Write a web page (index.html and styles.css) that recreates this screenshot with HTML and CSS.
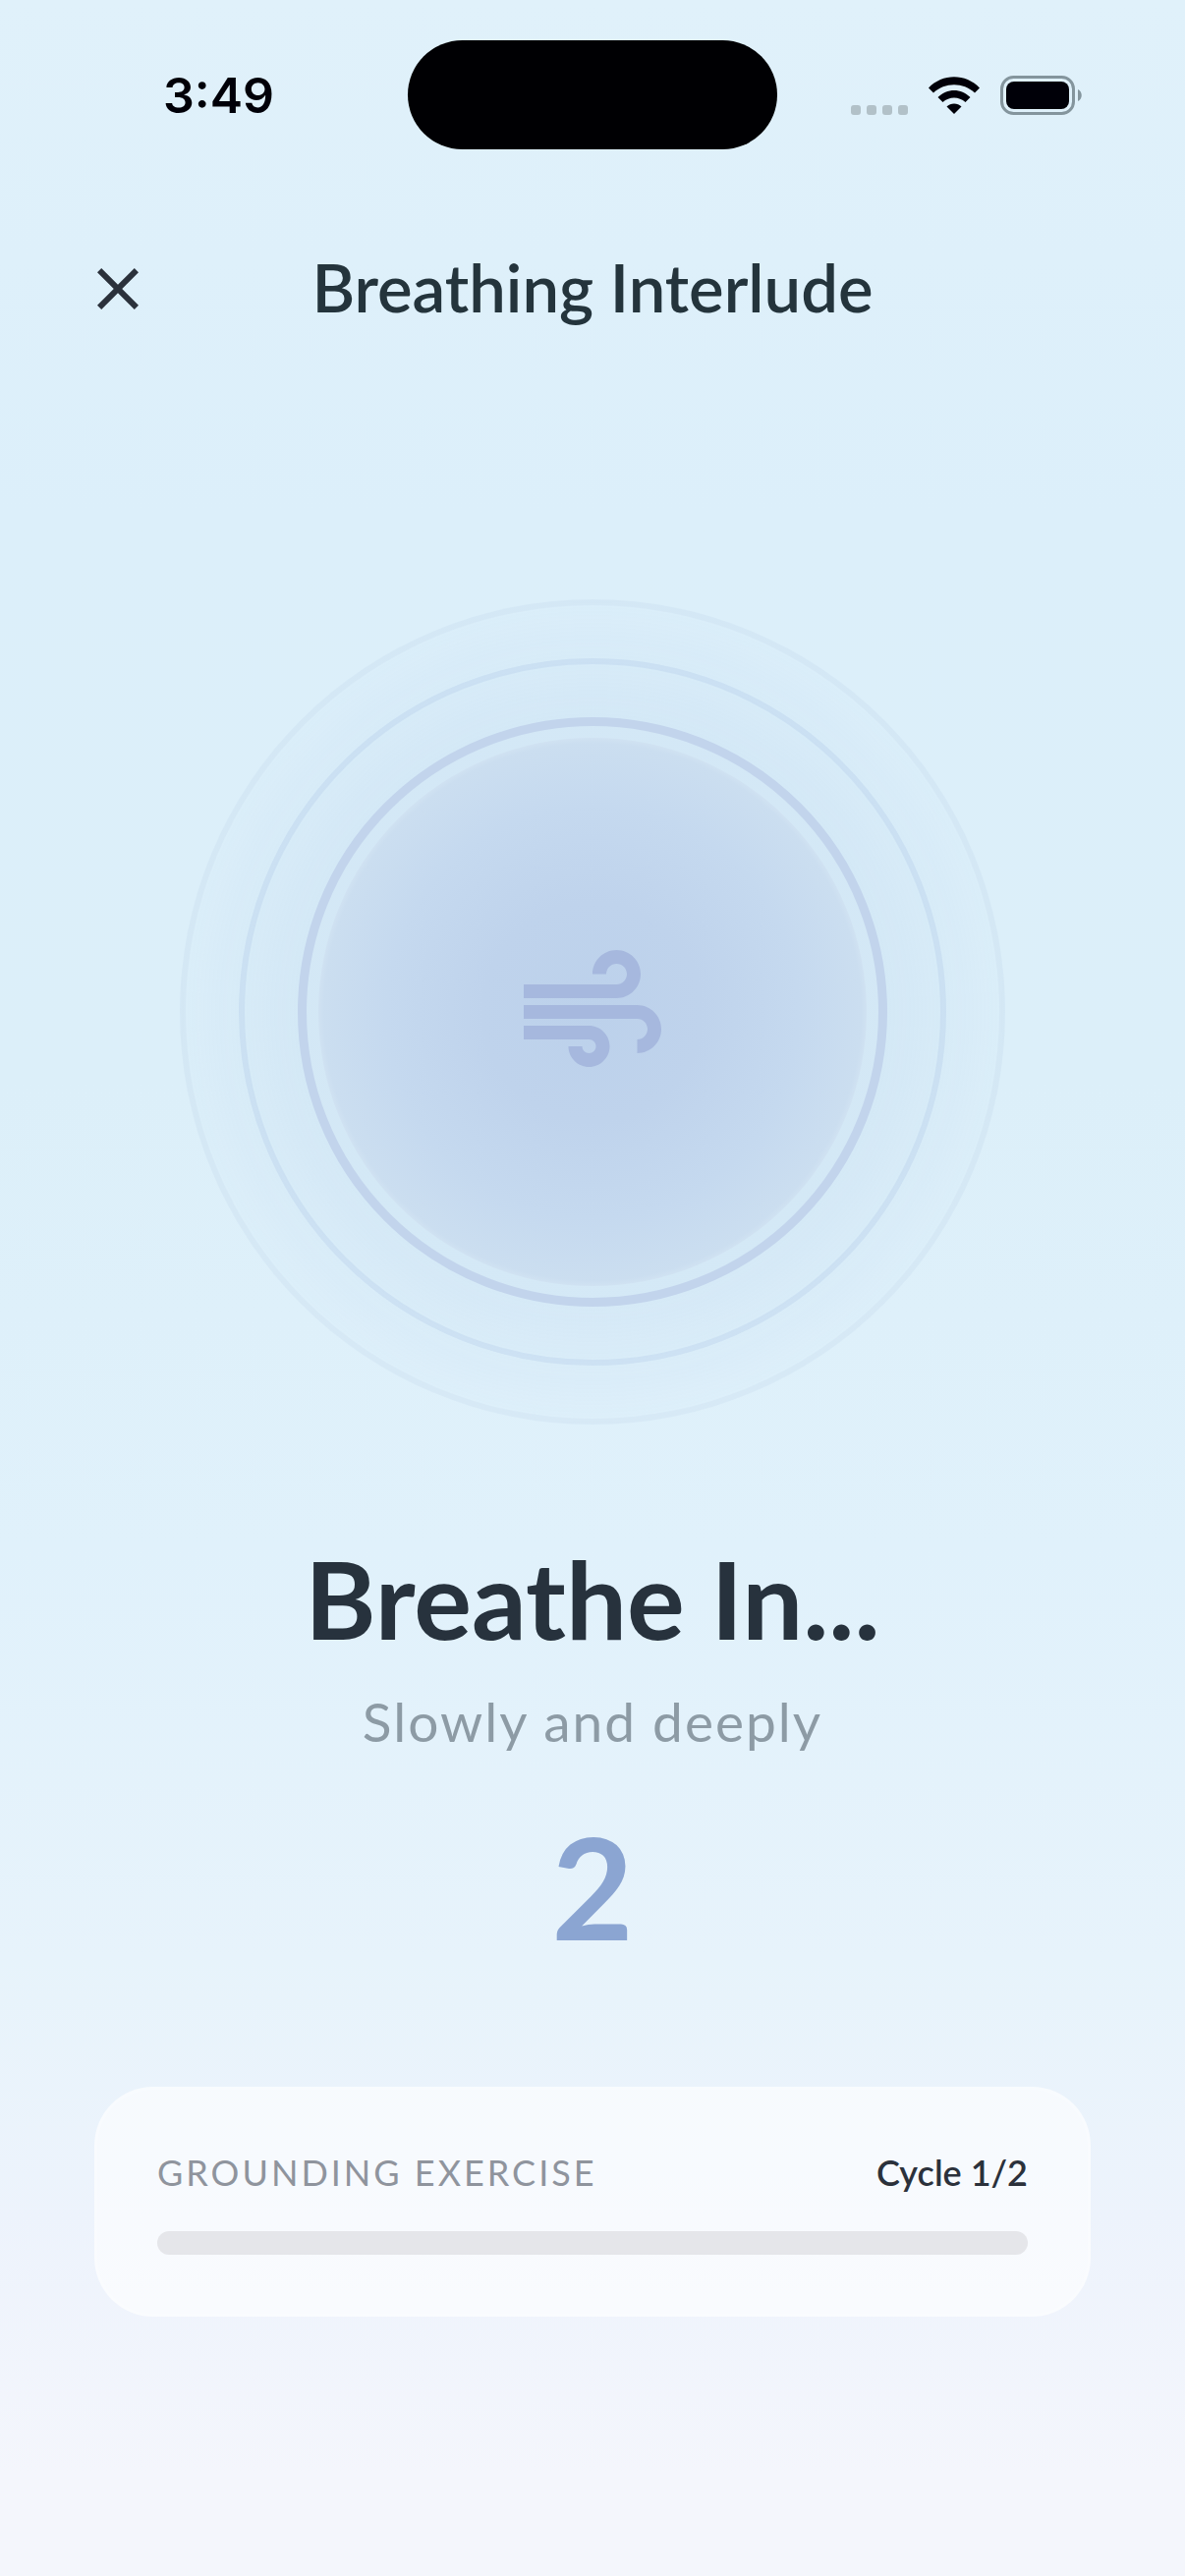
FILE: index.html
```html
<!DOCTYPE html>
<html lang="en">
<head>
    <meta charset="UTF-8">
    <meta name="viewport" content="width=device-width, initial-scale=1.0">
    <title>Breathing Interlude</title>
    <link rel="stylesheet" href="styles.css">
</head>
<body>
    <div class="screen">

        <!-- Status bar -->
        <div class="status-bar">
            <span class="time">3:49</span>
            <div class="island"></div>
            <div class="status-icons">
                <div class="signal"><i></i><i></i><i></i><i></i></div>
                <svg class="wifi" viewBox="0 0 52 38" aria-hidden="true">
                    <path d="M0 11.500C14-3.500 38-3.500 52 11.500L47 16.500C35.500 5.500 16.500 5.500 5 16.500Z"/>
                    <path d="M9.500 21C19 11.500 33 11.500 42.500 21L37.500 26C31 20 21 20 14.500 26Z"/>
                    <path d="M18.500 30.500C22.500 26.500 29.500 26.500 33.500 30.500L26 38Z"/>
                </svg>
                <svg class="battery" viewBox="0 0 84 40" aria-hidden="true">
                    <rect class="battery-shell" x="1.500" y="1.500" width="73" height="37" rx="12"/>
                    <rect x="6" y="6" width="64" height="28" rx="8"/>
                    <path class="battery-tip" d="M79 14C84 16 84 24 79 26Z"/>
                </svg>
            </div>
        </div>

        <!-- Header -->
        <header class="header">
            <button class="close-btn" type="button" aria-label="Close">
                <svg viewBox="0 0 24 24" aria-hidden="true">
                    <path d="M19 6.410 17.590 5 12 10.590 6.410 5 5 6.410 10.590 12 5 17.590 6.410 19 12 13.410 17.590 19 19 17.590 13.410 12z"/>
                </svg>
            </button>
            <h1>Breathing Interlude</h1>
        </header>

        <main class="content">
            <!-- Breathing circle -->
            <div class="breath">
                <div class="ring ring-outer">
                    <div class="ring ring-middle">
                        <div class="ring ring-inner">
                            <div class="disc">
                                <svg class="air" viewBox="0 0 24 24" aria-hidden="true">
                                    <path d="M14.500 17c0 1.650-1.350 3-3 3s-3-1.350-3-3h2c0 .55.45 1 1 1s1-.45 1-1-.45-1-1-1H2v-2h9.500c1.650 0 3 1.350 3 3zM19 6.500C19 4.570 17.430 3 15.500 3S12 4.570 12 6.500h2c0-.83.67-1.500 1.500-1.500s1.500.67 1.500 1.500S16.330 8 15.500 8H2v2h13.500c1.930 0 3.500-1.570 3.500-3.500zm-.5 4.500H2v2h16.500c.83 0 1.500.67 1.500 1.500s-.67 1.500-1.500 1.500v2c1.930 0 3.500-1.570 3.500-3.500S20.430 11 18.500 11z"/>
                                </svg>
                            </div>
                        </div>
                    </div>
                </div>
            </div>

            <h2 class="phase">Breathe In...</h2>
            <p class="hint">Slowly and deeply</p>
            <p class="count">2</p>

            <!-- Progress card -->
            <section class="card">
                <div class="card-row">
                    <label class="card-label" for="progress">GROUNDING EXERCISE</label>
                    <span class="cycle">Cycle 1/2</span>
                </div>
                <progress id="progress" class="progress" value="0" max="100"></progress>
            </section>
        </main>
    </div>
</body>
</html>
```

FILE: styles.css
```css
/* Basic styles */
* {
    box-sizing: border-box;
}

body {
    margin: 0;
    font-family: Lato, "Open Sans", sans-serif;
    color: #263238;
}

h1, h2, p {
    margin: 0;
}

.screen {
    min-height: 100vh;
    background: linear-gradient(180deg, #e0f1fa 0%, #dceffa 20%, #dceff9 42%, #e0f1fb 60%, #e7f3fb 76%, #edf3fc 86%, #f4f6fc 96%, #f4f6fc 100%);
}

/* Status bar */
.status-bar {
    display: grid;
    grid-template-columns: 1fr auto 1fr;
    align-items: center;
    padding: 41px 104px 0;
}

.time {
    font-family: Inter, sans-serif;
    font-size: 50px;
    font-weight: 600;
    line-height: 60px;
    padding-left: 62px;
    color: #000008;
}

.island {
    width: 376px;
    height: 111px;
    border-radius: 56px;
    background-color: #000003;
}

.status-icons {
    display: flex;
    align-items: center;
    justify-content: flex-end;
    gap: 21px;
    fill: #000008;
}

.signal {
    display: flex;
    align-self: flex-end;
    gap: 6px;
}

.signal i {
    width: 10px;
    height: 10px;
    border-radius: 3px;
    background-color: #b2c1c8;
}

.wifi {
    width: 52px;
    height: 38px;
}

.battery {
    width: 84px;
    height: 40px;
}

.battery-shell {
    fill: none;
    stroke: #84959d;
    stroke-width: 3;
}

.battery-tip {
    fill: #84959d;
}

/* Header */
.header {
    display: grid;
    grid-template-columns: 72px 1fr 72px;
    align-items: start;
    padding: 94px 84px 0;
}

.close-btn {
    width: 72px;
    height: 96px;
    padding: 0;
    border: none;
    background: none;
    cursor: pointer;
}

.close-btn svg {
    display: block;
    width: 72px;
    height: 72px;
    fill: #2b313b;
}

.header h1 {
    font-size: 67px;
    font-weight: 600;
    line-height: 92px;
    text-align: center;
    color: #24343c;
}

/* Breathing circle */
.content {
    display: flex;
    flex-direction: column;
    align-items: center;
    padding: 268px 96px 0;
}

.ring {
    display: flex;
    align-items: center;
    justify-content: center;
    border-radius: 50%;
    border-style: solid;
}

.ring-outer {
    width: 840px;
    height: 840px;
    border: 6px solid rgba(159, 178, 210, 0.09);
    background: radial-gradient(closest-side, rgba(160, 190, 230, 0.14) 70%, rgba(160, 190, 230, 0.02) 100%);
}

.ring-middle {
    width: 720px;
    height: 720px;
    border: 6px solid rgba(150, 175, 220, 0.18);
}

.ring-inner {
    width: 600px;
    height: 600px;
    border: 9px solid #c2d4ec;
}

.disc {
    display: flex;
    align-items: center;
    justify-content: center;
    width: 558px;
    height: 558px;
    border-radius: 50%;
    background: radial-gradient(closest-side, #bcd1eb 0%, #bfd3ec 40%, #c5d9ef 75%, #cbdef0 98%, #d0e2f2 100%);
}

.air {
    width: 168px;
    height: 168px;
    fill: #a6b8de;
}

/* Texts */
.phase {
    margin-top: 104px;
    font-size: 110px;
    font-weight: 700;
    line-height: 144px;
    color: #27323d;
}

.hint {
    margin-top: 18px;
    font-size: 55px;
    line-height: 72px;
    letter-spacing: 2px;
    color: #8d9ba5;
}

.count {
    margin-top: 36px;
    font-size: 144px;
    font-weight: 700;
    line-height: 192px;
    color: #8ba5d2;
}

/* Progress card */
.card {
    width: 100%;
    margin-top: 108px;
    padding: 60px 61px;
    border: 3px solid rgba(255, 255, 255, 0.2);
    border-radius: 60px;
    background-color: rgba(255, 255, 255, 0.6);
}

.card-row {
    display: flex;
    align-items: center;
    justify-content: space-between;
    font-size: 36px;
    line-height: 48px;
}

.card-label {
    letter-spacing: 3px;
    color: #8f949d;
}

.cycle {
    font-weight: 600;
    color: #2b313b;
}

.progress {
    display: block;
    width: 100%;
    height: 24px;
    margin-top: 36px;
    border: none;
    border-radius: 12px;
    overflow: hidden;
    appearance: none;
    background-color: #e5e6ea;
}

.progress::-webkit-progress-bar {
    background-color: #e5e6ea;
}

.progress::-webkit-progress-value {
    background-color: #8ba5d2;
}
```
